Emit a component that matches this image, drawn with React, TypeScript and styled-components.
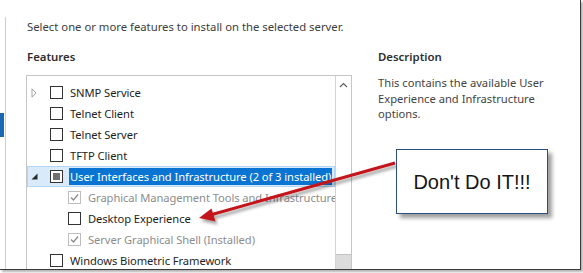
import React from "react";
import styled, { createGlobalStyle, css } from "styled-components";

const GlobalStyle = createGlobalStyle`
  html, body {
    margin: 0;
    padding: 0;
    background: #ffffff;
  }
  body {
    font-family: "Noto Sans", "Open Sans", sans-serif;
  }
`;

type Check = "off" | "on" | "partial";

type Feature = {
  label: string;
  level: number;
  expander?: "closed" | "open";
  check: Check;
  disabled?: boolean;
  selected?: boolean;
};

const features: Feature[] = [
  { label: "SNMP Service", level: 0, expander: "closed", check: "off" },
  { label: "Telnet Client", level: 0, check: "off" },
  { label: "Telnet Server", level: 0, check: "off" },
  { label: "TFTP Client", level: 0, check: "off" },
  {
    label: "User Interfaces and Infrastructure (2 of 3 installed)",
    level: 0,
    expander: "open",
    check: "partial",
    selected: true,
  },
  {
    label: "Graphical Management Tools and Infrastructure (Installed)",
    level: 1,
    check: "on",
    disabled: true,
  },
  { label: "Desktop Experience", level: 1, check: "off" },
  { label: "Server Graphical Shell (Installed)", level: 1, check: "on", disabled: true },
  { label: "Windows Biometric Framework", level: 0, check: "off" },
];

export default function App() {
  return (
    <Page>
      <GlobalStyle />
      <Frame>
        <Rail>
          <Marker />
        </Rail>
        <Main>
          <Intro>Select one or more features to install on the selected server.</Intro>
          <Columns>
            <FeaturesCol>
              <Heading>Features</Heading>
              <ListBox>
                <Rows>
                  {features.map((f) => (
                    <Row key={f.label} $level={f.level} $selected={f.selected}>
                      <Expander>
                        {f.expander === "closed" && (
                          <svg width="6" height="10" viewBox="0 0 6 10">
                            <path d="M1 0.8 L5 5 L1 9.2 Z" fill="none" stroke="#a2a2a2" strokeWidth="1" />
                          </svg>
                        )}
                        {f.expander === "open" && (
                          <svg width="7" height="7" viewBox="0 0 7 7">
                            <path d="M6.5 0.5 L6.5 6.5 L0.5 6.5 Z" fill="#2b2b2b" />
                          </svg>
                        )}
                      </Expander>
                      <Box $disabled={f.disabled}>
                        {f.check === "on" && (
                          <svg width="11" height="11" viewBox="0 0 11 11">
                            <path d="M2 5.5 L4.5 8 L9 2.5" fill="none" stroke="#8c8c8c" strokeWidth="1.3" />
                          </svg>
                        )}
                        {f.check === "partial" && <Partial />}
                      </Box>
                      <Label $disabled={f.disabled} $selected={f.selected}>
                        {f.label}
                      </Label>
                    </Row>
                  ))}
                </Rows>
                <Scrollbar>
                  <ScrollArrow>
                    <svg width="9" height="6" viewBox="0 0 9 6">
                      <path d="M1 5 L4.5 1.5 L8 5" fill="none" stroke="#5f5f5f" strokeWidth="1.2" />
                    </svg>
                  </ScrollArrow>
                  <Thumb />
                </Scrollbar>
              </ListBox>
            </FeaturesCol>
            <DescCol>
              <Heading>Description</Heading>
              <DescText>
                This contains the available User
                <br />
                Experience and Infrastructure
                <br />
                options.
              </DescText>
            </DescCol>
          </Columns>
        </Main>
      </Frame>
      <Arrow width="583" height="273" viewBox="0 0 583 273">
        <defs>
          <filter id="shade" x="-10%" y="-30%" width="130%" height="180%">
            <feDropShadow dx="2" dy="3" stdDeviation="1.6" floodColor="#000" floodOpacity="0.35" />
          </filter>
        </defs>
        <g filter="url(#shade)">
          <line x1="395" y1="163" x2="212" y2="214.5" stroke="#c3161c" strokeWidth="3" />
          <path d="M199 218 L211.5 208.5 L215.5 221.5 Z" fill="#c3161c" />
        </g>
      </Arrow>
      <Callout>Don't Do IT!!!</Callout>
    </Page>
  );
}

const Page = styled.div`
  position: relative;
  width: 583px;
  height: 273px;
  overflow: hidden;
  background: #ffffff;
`;

const Frame = styled.div`
  display: flex;
  width: 580px;
  height: 269px;
  border-right: 1px solid #3b3b3b;
  border-bottom: 1px solid #3b3b3b;
  box-shadow: 2px 2px 2px rgba(0, 0, 0, 0.3);
  overflow: hidden;
  background: #ffffff;
`;

const Rail = styled.div`
  flex-shrink: 0;
  width: 5px;
  margin-top: 17px;
  border-right: 1px solid #cfcfcf;
`;

const Marker = styled.div`
  width: 4px;
  height: 24px;
  margin-top: 96px;
  background: #1a68b3;
`;

const Main = styled.div`
  flex: 1;
  padding: 19px 0 0 20px;
`;

const Intro = styled.div`
  margin-left: 1px;
  font-size: 11.3px;
  line-height: 16px;
  color: #3d3d3d;
  white-space: nowrap;
`;

const Columns = styled.div`
  display: flex;
  margin-top: 14px;
`;

const FeaturesCol = styled.div`
  flex-shrink: 0;
  width: 326px;
`;

const Heading = styled.div`
  margin-left: 1px;
  margin-bottom: 10px;
  font-size: 11.4px;
  font-weight: 600;
  line-height: 16px;
  color: #2e2e2e;
`;

const ListBox = styled.div`
  display: flex;
  height: 194px;
  border: 1px solid #c6c6c6;
  border-bottom: none;
`;

const Rows = styled.div`
  flex: 1;
  min-width: 0;
  padding-top: 6px;
  overflow: hidden;
`;

const Row = styled.div<{ $level: number; $selected?: boolean }>`
  display: flex;
  align-items: center;
  height: 21px;
  padding-left: ${(p) => 4 + p.$level * 18}px;
  white-space: nowrap;
  box-sizing: border-box;
  ${(p) =>
    p.$selected &&
    css`
      background: #d9ebfa;
      box-shadow: inset 0 0 0 1px #b3d6f5;
    `}
`;

const Expander = styled.div`
  display: flex;
  align-items: center;
  flex-shrink: 0;
  width: 19px;
  height: 21px;
`;

const Box = styled.div<{ $disabled?: boolean }>`
  display: flex;
  align-items: center;
  justify-content: center;
  flex-shrink: 0;
  box-sizing: border-box;
  width: 13px;
  height: 13px;
  border: 1px solid ${(p) => (p.$disabled ? "#bdbdbd" : "#333333")};
  background: #ffffff;
`;

const Partial = styled.div`
  width: 7px;
  height: 7px;
  background: #707070;
`;

const Label = styled.span<{ $disabled?: boolean; $selected?: boolean }>`
  margin-left: 6px;
  padding: 1px 1px;
  font-size: 11.2px;
  letter-spacing: -0.08px;
  line-height: 15px;
  color: ${(p) => (p.$disabled ? "#8d8d8d" : "#1e1e1e")};
  ${(p) =>
    p.$selected &&
    css`
      background: #0a74d2;
      color: #ffffff;
    `}
`;

const Scrollbar = styled.div`
  display: flex;
  flex-direction: column;
  flex-shrink: 0;
  width: 15px;
  border-left: 1px solid #d3d3d3;
`;

const ScrollArrow = styled.div`
  display: flex;
  align-items: center;
  justify-content: center;
  height: 18px;
  margin-bottom: auto;
`;

const Thumb = styled.div`
  height: 15px;
  background: #dcdcdc;
  border-top: 1px solid #c4c4c4;
`;

const DescCol = styled.div`
  margin-left: 25px;
`;

const DescText = styled.div`
  margin-left: 1px;
  margin-top: 1px;
  font-size: 11.2px;
  line-height: 15.5px;
  color: #444444;
  white-space: nowrap;
`;

const Arrow = styled.svg`
  position: absolute;
  left: 0;
  top: 0;
  pointer-events: none;
`;

const Callout = styled.div`
  position: absolute;
  left: 396px;
  top: 149px;
  box-sizing: border-box;
  display: flex;
  align-items: center;
  justify-content: center;
  width: 152px;
  height: 65px;
  padding-top: 2px;
  border: 1px solid #2d4f80;
  background: #ffffff;
  box-shadow: 4px 4px 4px rgba(0, 0, 0, 0.38);
  font-family: "Liberation Sans", Arial, sans-serif;
  font-size: 20px;
  color: #151515;
`;
